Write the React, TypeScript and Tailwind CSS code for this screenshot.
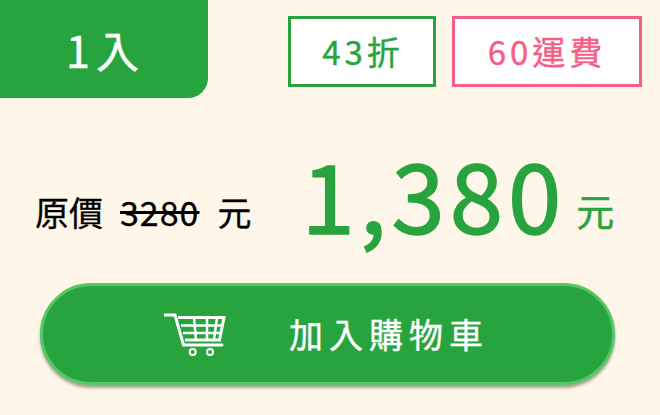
export default function App() {
  return (
    <div className="w-[660px] h-[415px] bg-[#fff6ea] flex flex-col overflow-hidden font-['Noto_Sans_CJK_TC','Noto_Sans',sans-serif]">
      <div className="flex items-start">
        <div className="w-[208px] h-[98px] bg-[#28a43e] rounded-br-[20px] flex items-center justify-center text-white text-[43px] leading-none tracking-[6px] pl-[3px] [-webkit-text-stroke:0.5px]">1入</div>
        <div className="ml-[80px] mt-[16px] w-[148px] h-[71px] border-[3px] border-[#28a43e] bg-white flex items-center justify-center text-[#28a43e] text-[33px] leading-none tracking-[4px] pl-[2px] [-webkit-text-stroke:0.4px]">43折</div>
        <div className="ml-[16px] mt-[16px] w-[190px] h-[71px] border-[3px] border-[#f55f87] bg-white flex items-center justify-center text-[#f55f87] text-[33px] leading-none tracking-[4px] [-webkit-text-stroke:0.4px]">60運費</div>
      </div>
      <div className="flex items-end h-[170px] pl-[35px]">
        <div className="flex items-center text-black text-[34px] leading-none mb-[39px] [-webkit-text-stroke:0.3px]">
          <span>原價</span>
          <span className="ml-[17px] line-through tracking-[1px]">3280</span>
          <span className="ml-[18px]">元</span>
        </div>
        <div className="ml-[50px] text-[#28a43e] text-[96px] leading-none tracking-[5px] mb-[27px] [-webkit-text-stroke:1.5px]">1,380</div>
        <div className="ml-[10px] text-[#28a43e] text-[38px] leading-none mb-[39px] [-webkit-text-stroke:0.5px]">元</div>
      </div>
      <div className="ml-[40px] mt-[15px] w-[575px] h-[102px] rounded-[51px] bg-[#28a43e] border-[3px] border-[#55c765] shadow-[0_3px_3px_rgba(0,0,0,0.35)] flex items-center text-white text-[34px] tracking-[6px]">
        <svg className="ml-[121px]" width="62" height="46" viewBox="0 0 62 46" fill="none" stroke="white" strokeWidth="3">
          <path d="M0.5 4H11L19.5 34H58" strokeLinecap="round" />
          <path d="M14 6.5H60L55.5 29H21" />
          <path d="M17 14.5H58M19 22H57M30 6.5L32 29M43 6.5V29M53 6.5L50 29" strokeWidth="2.5" />
          <circle cx="28.7" cy="41" r="3" strokeWidth="2" />
          <circle cx="46" cy="41" r="3" strokeWidth="2" />
        </svg>
        <span className="ml-[63px] leading-none [-webkit-text-stroke:0.4px]">加入購物車</span>
      </div>
    </div>
  );
}
